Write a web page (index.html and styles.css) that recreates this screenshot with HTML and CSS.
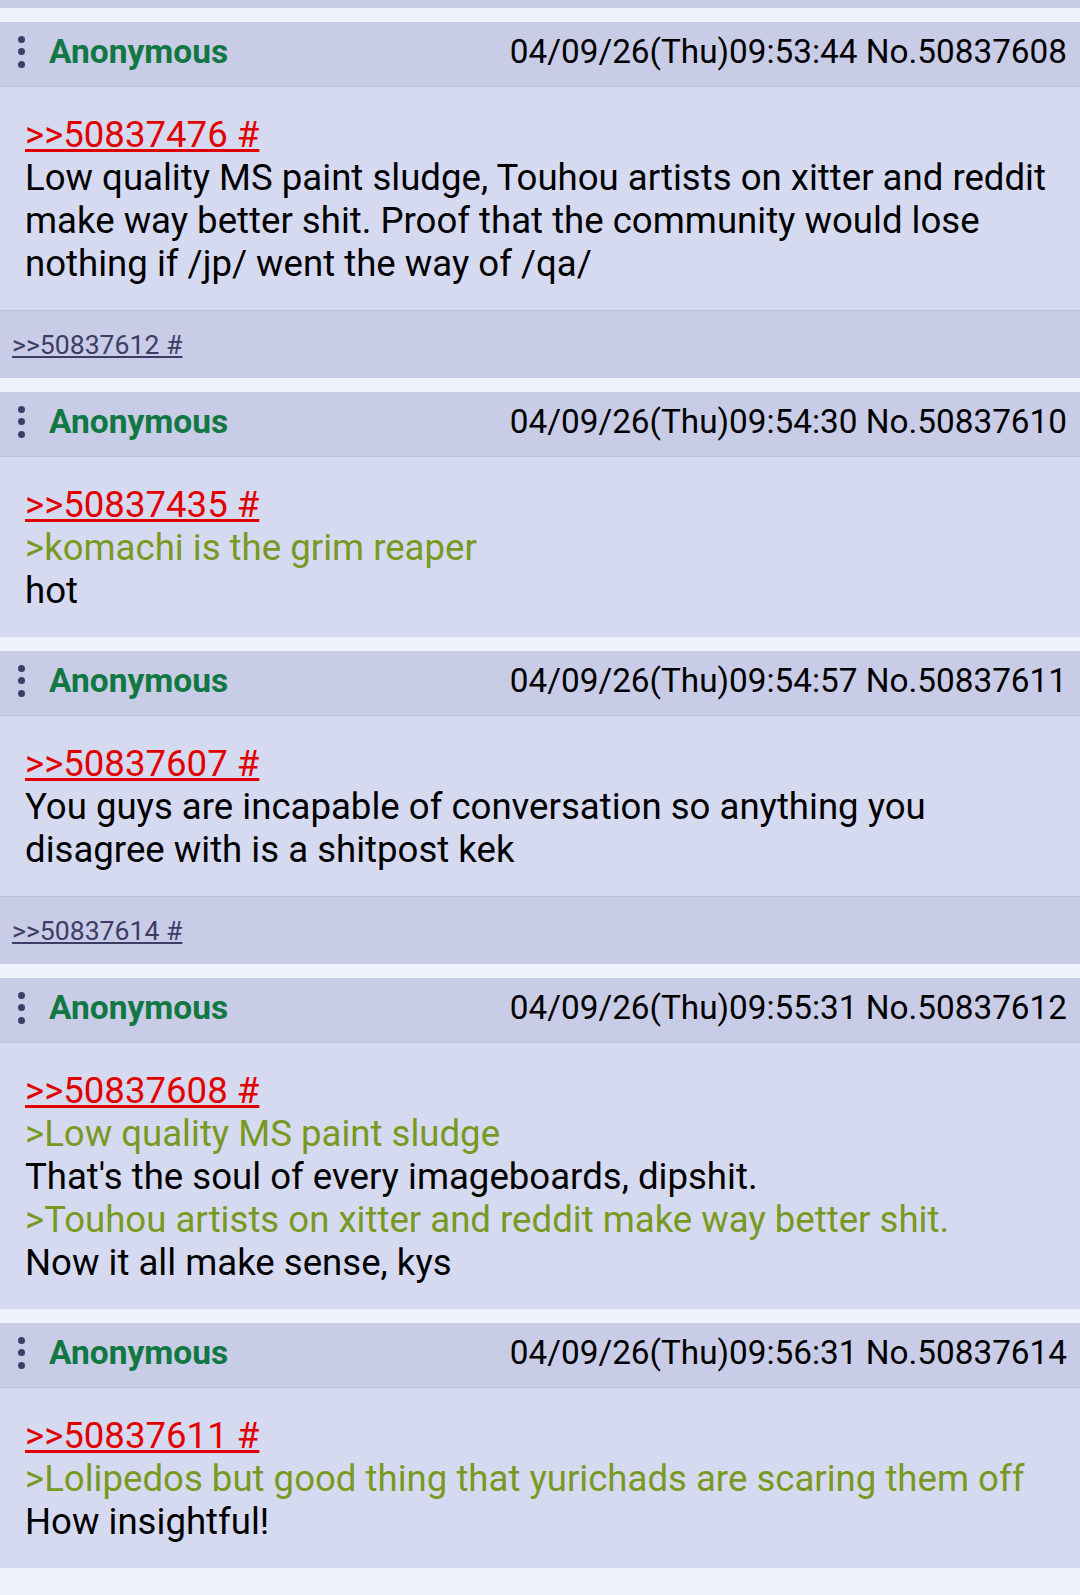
FILE: index.html
```html
<!DOCTYPE html>
<html>
<head>
    <meta charset="UTF-8">
    <title>/jp/ thread</title>
    <link rel="stylesheet" href="styles.css">
</head>
<body>
    <div class="tail"></div>

    <div class="post">
        <div class="post-head">
            <span class="menu"><i></i><i></i><i></i></span>
            <span class="name">Anonymous</span>
            <span class="date">04/09/26(Thu)09:53:44 No.50837608</span>
        </div>
        <div class="post-body">
            <a class="quote" href="#">&gt;&gt;50837476 #</a><br>
            Low quality MS paint sludge, Touhou artists on xitter and reddit make way better shit. Proof that the community would lose nothing if /jp/ went the way of /qa/
        </div>
        <div class="post-replies"><a href="#">&gt;&gt;50837612 #</a></div>
    </div>

    <div class="post">
        <div class="post-head">
            <span class="menu"><i></i><i></i><i></i></span>
            <span class="name">Anonymous</span>
            <span class="date">04/09/26(Thu)09:54:30 No.50837610</span>
        </div>
        <div class="post-body">
            <a class="quote" href="#">&gt;&gt;50837435 #</a><br>
            <span class="green">&gt;komachi is the grim reaper</span><br>
            hot
        </div>
    </div>

    <div class="post">
        <div class="post-head">
            <span class="menu"><i></i><i></i><i></i></span>
            <span class="name">Anonymous</span>
            <span class="date">04/09/26(Thu)09:54:57 No.50837611</span>
        </div>
        <div class="post-body">
            <a class="quote" href="#">&gt;&gt;50837607 #</a><br>
            You guys are incapable of conversation so anything you disagree with is a shitpost kek
        </div>
        <div class="post-replies"><a href="#">&gt;&gt;50837614 #</a></div>
    </div>

    <div class="post">
        <div class="post-head">
            <span class="menu"><i></i><i></i><i></i></span>
            <span class="name">Anonymous</span>
            <span class="date">04/09/26(Thu)09:55:31 No.50837612</span>
        </div>
        <div class="post-body">
            <a class="quote" href="#">&gt;&gt;50837608 #</a><br>
            <span class="green">&gt;Low quality MS paint sludge</span><br>
            That's the soul of every imageboards, dipshit.<br>
            <span class="green">&gt;Touhou artists on xitter and reddit make way better shit.</span><br>
            Now it all make sense, kys
        </div>
    </div>

    <div class="post">
        <div class="post-head">
            <span class="menu"><i></i><i></i><i></i></span>
            <span class="name">Anonymous</span>
            <span class="date">04/09/26(Thu)09:56:31 No.50837614</span>
        </div>
        <div class="post-body">
            <a class="quote" href="#">&gt;&gt;50837611 #</a><br>
            <span class="green">&gt;Lolipedos but good thing that yurichads are scaring them off</span><br>
            How insightful!
        </div>
    </div>
</body>
</html>
```

FILE: styles.css
```css
body {
    margin: 0;
    background: #eef2fc;
    font-family: Roboto, "Noto Sans", sans-serif;
    color: #000;
}
.tail {
    height: 8px;
    background: #c9cce6;
    margin-bottom: 14px;
}
.post {
    margin-bottom: 14px;
    background: #d6daf0;
}
.post-head {
    display: flex;
    align-items: center;
    box-sizing: border-box;
    height: 65px;
    padding: 0 13px 5px 18px;
    background: #c9cce6;
    border-bottom: 1px solid #b9c3d9;
    font-size: 33.3px;
}
.menu {
    display: flex;
    flex-direction: column;
    gap: 5.5px;
    width: 7px;
    margin-right: 24px;
}
.menu i {
    display: block;
    width: 7px;
    height: 7px;
    border-radius: 50%;
    background: #3d3d6b;
}
.name {
    color: #117743;
    font-weight: bold;
    font-size: 33.5px;
}
.date {
    margin-left: auto;
}
.post-body {
    padding: 26px 25px 25px;
    font-size: 36.6px;
    line-height: 43px;
}
.quote {
    color: #e00000;
}
.green {
    color: #789922;
}
.post-replies {
    display: flex;
    align-items: center;
    height: 67px;
    padding: 0 12px;
    background: #c9cce6;
    border-top: 1px solid #b9c3d9;
    font-size: 26.6px;
}
.post-replies a {
    color: #3c3c66;
}
```
